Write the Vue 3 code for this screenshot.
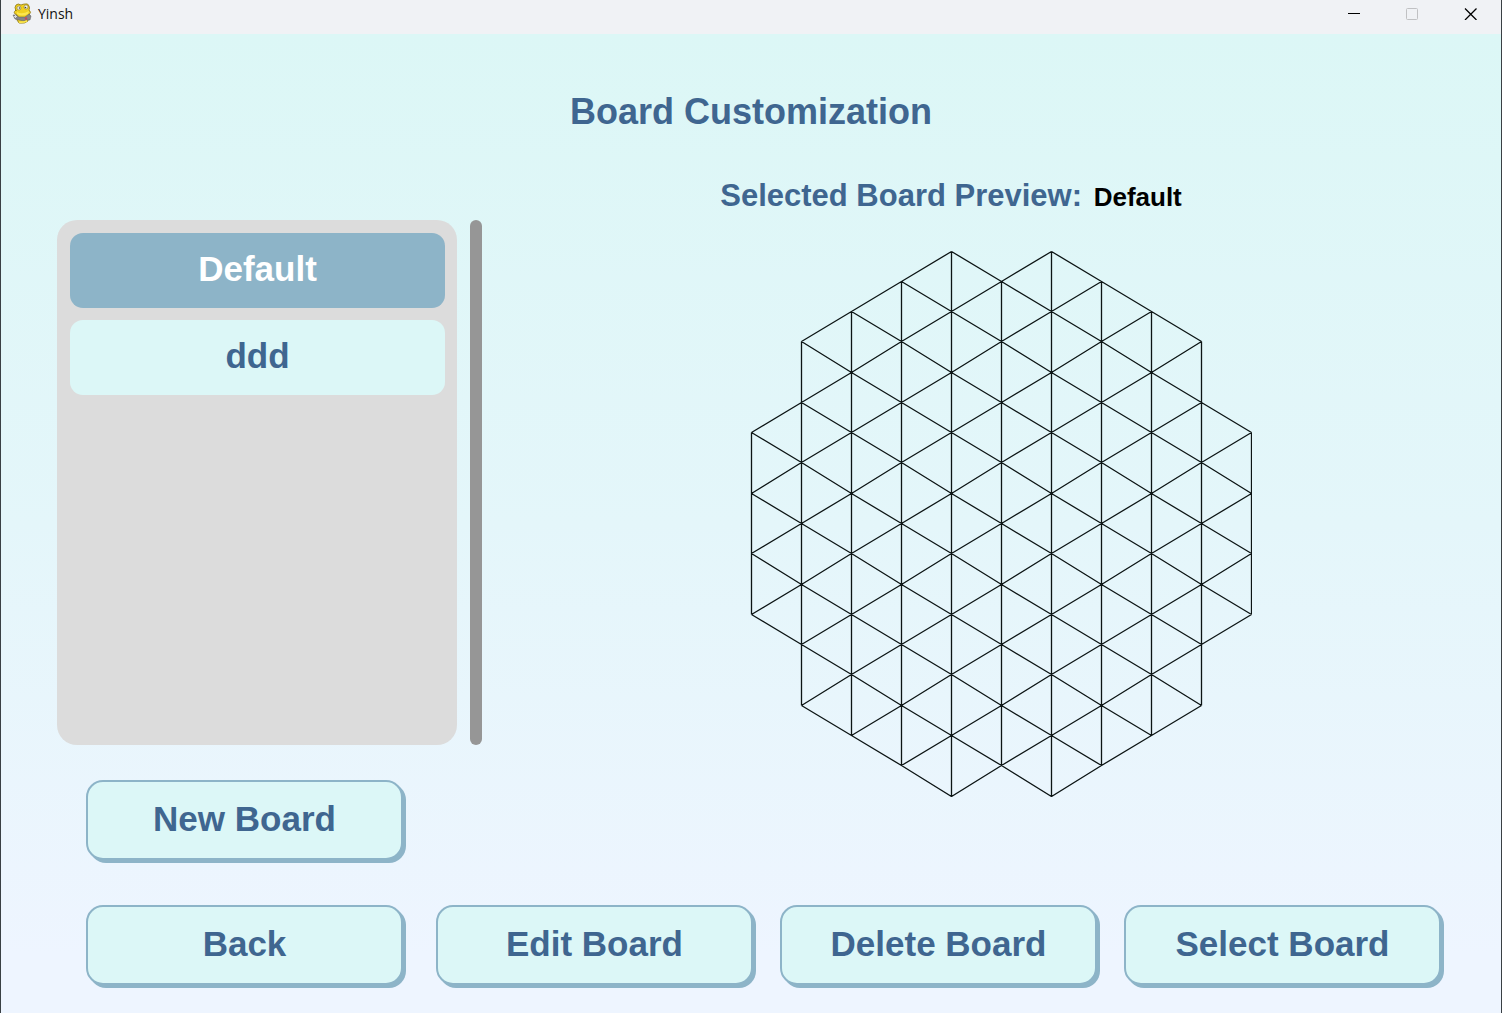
<script setup>
import { ref, computed } from 'vue'

const boards = ref(['Default', 'ddd'])
const selected = ref('Default')
const actions = ['Edit Board', 'Delete Board', 'Select Board']

// How many half steps each column reaches above and below the centre row.
const reach = [3, 6, 7, 8, 9, 8, 9, 8, 7, 6, 3]
const STEP_X = 50
const X0 = 2
const CENTER_Y = 274

const px = (col) => X0 + col * STEP_X - 0.5
const py = (row) => Math.round(CENTER_Y + (row * 545) / 18) - 0.5

const has = (col, row) =>
  col < reach.length && Math.abs(row) <= reach[col] && (row + reach[col]) % 2 === 0

const gridPath = computed(() => {
  const parts = []
  reach.forEach((r, col) => {
    parts.push(`M${px(col)} ${py(-r)}V${py(r)}`)
    for (let row = -r; row <= r; row += 2) {
      for (const next of [row - 1, row + 1]) {
        if (has(col + 1, next)) {
          parts.push(`M${px(col)} ${py(row)}L${px(col + 1)} ${py(next)}`)
        }
      }
    }
  })
  return parts.join('')
})
</script>

<template>
  <div class="window">
    <header class="titlebar">
      <svg class="app-icon" viewBox="0 0 20 21" width="20" height="21" aria-hidden="true">
        <path d="M4 8 Q2 4 4 2 Q6 0 9 2 Q11 1 13 1 Q16 0 17 3 Q18 5 17 7 Q20 9 17 12 L16 15 L16 18 Q13 21 7 20 L5 17 L5 12 Q0 10 4 7Z" fill="#f0d020" stroke="#8a7414" stroke-width=".8" />
        <path d="M5 9 Q10 12 17 8 L16 11 Q10 14 5 11Z" fill="#fbe650" />
        <circle cx="7" cy="5" r="2" fill="#f4f4ee" stroke="#77671c" stroke-width=".5" />
        <circle cx="14" cy="4" r="2" fill="#f4f4ee" stroke="#77671c" stroke-width=".5" />
        <circle cx="7.500" cy="5" r=".8" fill="#444" />
        <circle cx="13.500" cy="4.500" r=".8" fill="#444" />
        <path d="M1 12 L4 12 L7 14 L13 14 L17 11 L19 13 L18 17 L14 17 L12 18 L7 17 L3 16Z" fill="#858588" stroke="#5c5c60" stroke-width=".5" />
        <path d="M2 13.500h3M3.500 12v3" stroke="#d8d8da" stroke-width="1" />
        <circle cx="14" cy="15.500" r="1.200" fill="#c8485a" />
        <path d="M7 19 Q10 20 15 18" fill="none" stroke="#fbe650" stroke-width="1.500" />
      </svg>
      <span class="app-name">Yinsh</span>
      <div class="controls">
        <button type="button" aria-label="Minimize">
          <svg viewBox="0 0 14 14" width="14" height="14"><path d="M1 7.500h12" stroke="#000" /></svg>
        </button>
        <button type="button" aria-label="Maximize" disabled>
          <svg viewBox="0 0 14 14" width="14" height="14"><rect x="1.500" y="2.500" width="11" height="11" rx="1" fill="none" stroke="#c0c1c3" /></svg>
        </button>
        <button type="button" aria-label="Close">
          <svg viewBox="0 0 14 14" width="14" height="14"><path d="M2 2.500l11.500 11.500M13.500 2.500l-11.500 11.500" stroke="#000" stroke-width="1.300" /></svg>
        </button>
      </div>
    </header>

    <main class="screen">
      <h1>Board Customization</h1>

      <div class="content">
        <section class="boards">
          <div class="list-row">
            <ul class="list">
              <li v-for="name in boards" :key="name">
                <button
                  type="button"
                  class="item"
                  :class="{ active: name === selected }"
                  @click="selected = name"
                >{{ name }}</button>
              </li>
            </ul>
            <div class="scrollbar"></div>
          </div>
          <button type="button" class="action new-board">New Board</button>
        </section>

        <section class="preview">
          <h2>Selected Board Preview: <span>{{ selected }}</span></h2>
          <svg class="grid" viewBox="0 0 502 547" width="502" height="547" role="img" aria-label="Board preview">
            <path :d="gridPath" fill="none" stroke="#0c1414" stroke-width="1.300" />
          </svg>
        </section>
      </div>

      <footer class="actions">
        <button type="button" class="action">Back</button>
        <div class="action-group">
          <button v-for="label in actions" :key="label" type="button" class="action">{{ label }}</button>
        </div>
      </footer>
    </main>
  </div>
</template>

<style>
body {
  background: #30363a;
}
</style>

<style scoped>
* {
  box-sizing: border-box;
}

.window {
  display: flex;
  flex-direction: column;
  min-height: 100vh;
  border: solid #3a4044;
  border-width: 0 1px;
  font-family: "Liberation Sans", Arial, sans-serif;
  font-weight: 700;
  color: #3f6690;
}

.titlebar {
  display: flex;
  align-items: flex-start;
  height: 34px;
  padding: 3px 2px 0 11px;
  background: #f0f2f5;
}

.app-name {
  margin-left: 6px;
  font: 400 14px/22px "Open Sans", "Noto Sans", sans-serif;
  color: #111;
}

.controls {
  display: flex;
  margin-left: auto;
}

.controls button {
  display: flex;
  align-items: center;
  justify-content: center;
  width: 58px;
  height: 20px;
  padding: 0;
  border: 0;
  background: none;
}

.screen {
  display: flex;
  flex: 1;
  flex-direction: column;
  background: linear-gradient(#dcf7f6, #e4f6fa 50%, #eef5ff 94%);
}

h1,
h2 {
  margin: 0;
  font-weight: 700;
  text-align: center;
}

h1 {
  padding-top: 58px;
  font-size: 36px;
  line-height: 40px;
}

.content {
  display: flex;
  margin-top: 46px;
}

.boards {
  flex: none;
  width: 500px;
  padding: 42px 0 0 56px;
}

.list-row {
  display: flex;
  gap: 13px;
}

.list {
  display: flex;
  flex-direction: column;
  gap: 12px;
  width: 400px;
  min-height: 525px;
  margin: 0;
  padding: 13px 12px 13px 13px;
  border-radius: 20px;
  background: #dcdcdc;
  list-style: none;
}

.item {
  display: block;
  width: 100%;
  height: 75px;
  padding: 0 0 3px;
  border: 0;
  border-radius: 13px;
  background: #dcf7f7;
  color: #3f6690;
  font: inherit;
  font-size: 35px;
}

.item.active {
  background: #8db4c8;
  color: #fff;
}

.scrollbar {
  width: 12px;
  border-radius: 6px;
  background: #969696;
}

.action {
  width: 317px;
  height: 80px;
  padding: 0 0 3px;
  border: 2px solid #8db4c8;
  border-radius: 17px;
  background: #dcf7f7;
  box-shadow: 3px 3px 0 #8db4c8;
  color: #3f6690;
  font: inherit;
  font-size: 35px;
}

.new-board {
  margin: 35px 0 0 29px;
}

.preview {
  flex: 1;
  display: flex;
  flex-direction: column;
  align-items: center;
}

h2 {
  padding-right: 100px;
  font-size: 31px;
  line-height: 36px;
}

h2 span {
  margin-left: 3px;
  font-size: 26px;
  color: #000;
}

.grid {
  margin-top: 35px;
}

.actions {
  display: flex;
  justify-content: space-between;
  margin-top: 45px;
  padding: 0 60px 28px 85px;
}

.action-group {
  display: flex;
  gap: 27px;
}
</style>
